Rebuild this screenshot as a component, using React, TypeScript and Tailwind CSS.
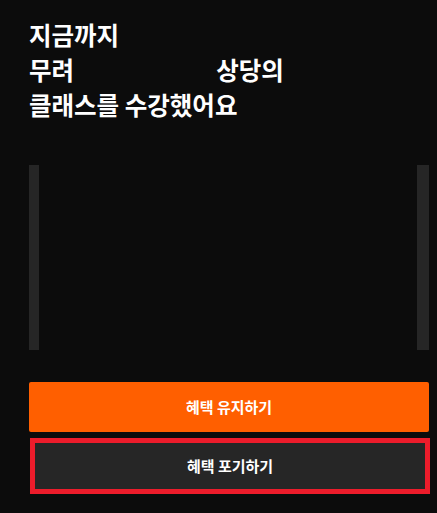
export default function App() {
  return (
    <div
      className="w-[437px] h-[513px] bg-[#0c0c0c] overflow-hidden"
      style={{ fontFamily: '"Noto Sans CJK KR", "Noto Sans", sans-serif' }}
    >
      <div className="px-[29px] pt-[17px]">
        {/* Title */}
        <h1 className="text-[24.5px] leading-[35px] font-bold text-white">
          지금까지
          <br />
          무려 <span className="inline-block w-[131px]" /> 상당의
          <br />
          클래스를 수강했어요
        </h1>

        {/* Carousel peeks */}
        <div className="mt-[43px] flex h-[185px] w-[400px]">
          <div className="w-[10px] bg-[#262626]" />
          <div className="flex-1" />
          <div className="w-[12px] bg-[#262626]" />
        </div>

        {/* Actions */}
        <button className="mt-[32px] flex h-[50px] w-[400px] items-center justify-center rounded-[2px] bg-[#ff5f00] text-[15px] font-bold text-white">
          혜택 유지하기
        </button>
        <button className="ml-px mt-[6px] flex h-[56px] w-[400px] items-center justify-center border-[5px] border-[#ec1c2b] bg-[#262626] text-[15px] font-bold text-white">
          혜택 포기하기
        </button>
      </div>
    </div>
  );
}
